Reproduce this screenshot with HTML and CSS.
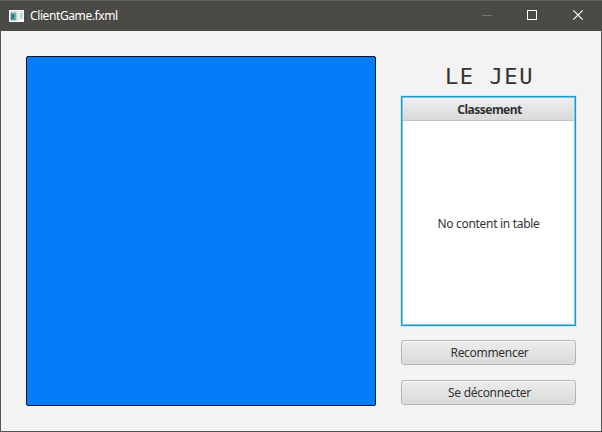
FILE: index.html
```html
<!DOCTYPE html>
<html lang="fr">
<head>
<meta charset="utf-8">
<title>ClientGame.fxml</title>
<link rel="stylesheet" href="styles.css">
</head>
<body>
<div class="window">
  <header class="titlebar">
    <svg class="app-icon" width="15" height="12" viewBox="0 0 15 12">
      <rect width="15" height="12" fill="#fafafa"/>
      <rect x="1.5" y="2.5" width="6" height="8" fill="#72a8a3"/>
      <rect x="2" y="4" width="3" height="5" fill="#397b80"/>
      <rect x="8.5" y="2.5" width="2" height="8" fill="#dce8e2"/>
      <rect x="11.5" y="3" width="2" height="6" fill="#b9c4bf"/>
      <rect x="1" y="1" width="13" height="1" fill="#d3dcda"/>
    </svg>
    <span class="title">ClientGame.fxml</span>
    <div class="controls">
      <svg width="46" height="30" viewBox="0 0 46 30"><path d="M18 14.5h10" stroke="#777573"/></svg>
      <svg width="46" height="30" viewBox="0 0 46 30"><rect x="17.5" y="9.5" width="9" height="9" fill="none" stroke="#fff"/></svg>
      <svg width="46" height="30" viewBox="0 0 46 30"><path d="M17.3 9.3l9.4 9.4M26.7 9.3l-9.4 9.4" stroke="#fff" stroke-width="1.2"/></svg>
    </div>
  </header>
  <main class="content">
    <div class="board"></div>
    <aside class="side">
      <h1 class="heading">LE JEU</h1>
      <section class="table">
        <div class="column-header"><span>Classement</span></div>
        <div class="placeholder"><span>No content in table</span></div>
      </section>
      <button class="button restart"><span>Recommencer</span></button>
      <button class="button"><span>Se déconnecter</span></button>
    </aside>
  </main>
</div>
</body>
</html>
```
FILE: styles.css
```css
* { box-sizing: border-box; }
body {
  margin: 0;
  font: 12px/16px "Noto Sans", "Open Sans", sans-serif;
  color: #333;
}
.window {
  width: 602px;
  height: 432px;
  border: 1px solid #555451;
  border-top: 0;
  background: #f3f3f3;
}
.titlebar {
  display: flex;
  align-items: center;
  height: 31px;
  margin: 0 -1px;
  padding: 0 0 0 9px;
  border-top: 1px solid #605f5d;
  background: #4b4a47;
  color: #fff;
}
.app-icon { margin-right: 6px; }
.title { letter-spacing: -0.4px; }
.controls { display: flex; margin-left: auto; }
.content { display: flex; gap: 25px; padding: 25px; }
.board {
  width: 350px;
  height: 350px;
  border: 1px solid #00142e;
  border-radius: 2px;
  background: #057dfa;
}
.side { display: flex; flex-direction: column; width: 175px; }
.heading {
  height: 40px;
  margin: 0;
  padding-left: 2px;
  font: 22px/41px "DejaVu Sans Mono", monospace;
  letter-spacing: 1.6px;
  text-align: center;
  white-space: pre;
}
.table {
  display: flex;
  flex-direction: column;
  height: 230px;
  border: 1px solid #1c9ac2;
  box-shadow: 0 0 0 1px #cfeaf4, inset 0 0 0 1px #7cc8e1;
  padding: 1px;
  background: #fff;
}
.column-header {
  height: 23px;
  padding-left: 2px;
  border-bottom: 1px solid #c4c4c4;
  background: linear-gradient(#efefef, #d9d9d9);
  font-weight: bold;
  line-height: 23px;
  text-align: center;
  letter-spacing: -0.5px;
}
.placeholder {
  display: flex;
  flex: 1;
  align-items: center;
  justify-content: center;
  padding-top: 3px;
  letter-spacing: -0.3px;
}
.button {
  width: 175px;
  height: 25px;
  margin-top: 15px;
  padding: 0 0 0 2px;
  border: 1px solid #b5b5b5;
  border-radius: 3px;
  background: linear-gradient(#ececec, #dadada);
  box-shadow: inset 0 1px #f8f8f8;
  color: #333;
  font: inherit;
  letter-spacing: -0.3px;
}
.restart { margin-top: 14px; }
```
